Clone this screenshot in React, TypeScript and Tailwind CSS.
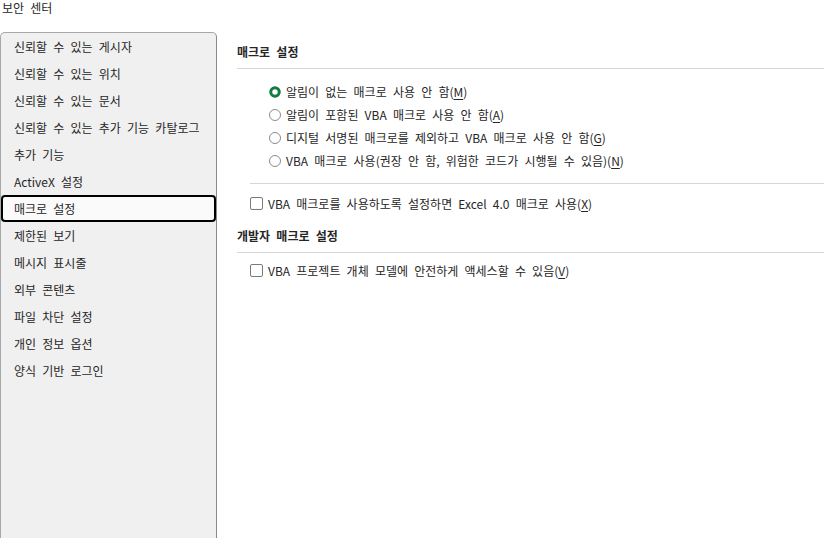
import React from "react";

const font = { fontFamily: '"Noto Sans CJK KR", "Noto Sans", sans-serif' };

const menu = [
  "신뢰할 수 있는 게시자",
  "신뢰할 수 있는 위치",
  "신뢰할 수 있는 문서",
  "신뢰할 수 있는 추가 기능 카탈로그",
  "추가 기능",
  "ActiveX 설정",
  "매크로 설정",
  "제한된 보기",
  "메시지 표시줄",
  "외부 콘텐츠",
  "파일 차단 설정",
  "개인 정보 옵션",
  "양식 기반 로그인",
];

function Radio({ checked }: { checked?: boolean }) {
  return (
    <svg width="12" height="12" viewBox="0 0 12 12" className="shrink-0">
      {checked ? (
        <circle cx="6" cy="6" r="4.25" fill="#ffffff" stroke="#107c41" strokeWidth="3" />
      ) : (
        <circle cx="6" cy="6" r="5.5" fill="#ffffff" stroke="#8a8a8a" strokeWidth="1" />
      )}
    </svg>
  );
}

function Check() {
  return <div className="w-[13px] h-[13px] shrink-0 rounded-[2px] border border-[#7a7a7a] bg-white" />;
}

function Acc({ k }: { k: string }) {
  return (
    <span>
      (<span className="underline underline-offset-2">{k}</span>)
    </span>
  );
}

export default function App() {
  return (
    <div
      className="w-[824px] h-[538px] bg-white text-[#262626] text-[12px] [word-spacing:3.5px] overflow-hidden flex flex-col"
      style={font}
    >
      <div className="h-[32px] pl-[2px] leading-[16px] text-[12px]">보안 센터</div>
      <div className="flex flex-1 min-h-0">
        <div className="w-[217px] shrink-0 bg-[#f0f0f0] border border-[#a8a8a8] border-r-[#8a8a8a] rounded-t-[5px] border-b-0 flex flex-col">
          {menu.map((m) =>
            m === "매크로 설정" ? (
              <div key={m} className="h-[27px] shrink-0 flex items-center pl-[11px] border-2 border-black rounded-[4px] bg-[#fafafa]">
                {m}
              </div>
            ) : (
              <div key={m} className="h-[27px] shrink-0 flex items-center pl-[13px]">
                {m}
              </div>
            )
          )}
        </div>
        <div className="flex-1 pl-[20px] flex flex-col">
          <div className="pt-[10px] pb-[6px] leading-[20px] font-bold border-b border-[#d6d6d6]">매크로 설정</div>
          <div className="mt-[11px] pl-[32px] flex flex-col">
            <div className="h-[23px] flex items-center gap-[5px]">
              <Radio checked />
              <span>
                알림이 없는 매크로 사용 안 함<Acc k="M" />
              </span>
            </div>
            <div className="h-[23px] flex items-center gap-[5px]">
              <Radio />
              <span>
                알림이 포함된 VBA 매크로 사용 안 함<Acc k="A" />
              </span>
            </div>
            <div className="h-[23px] flex items-center gap-[5px]">
              <Radio />
              <span>
                디지털 서명된 매크로를 제외하고 VBA 매크로 사용 안 함<Acc k="G" />
              </span>
            </div>
            <div className="h-[23px] flex items-center gap-[5px]">
              <Radio />
              <span>
                VBA 매크로 사용(권장 안 함, 위험한 코드가 시행될 수 있음)<Acc k="N" />
              </span>
            </div>
          </div>
          <div className="mt-[11px] ml-[13px] border-t border-[#d6d6d6]" />
          <div className="mt-[8px] ml-[13px] h-[23px] flex items-center gap-[5px]">
            <Check />
            <span>
              VBA 매크로를 사용하도록 설정하면 Excel 4.0 매크로 사용<Acc k="X" />
            </span>
          </div>
          <div className="mt-[11px] pb-[6px] leading-[20px] font-bold border-b border-[#d6d6d6]">개발자 매크로 설정</div>
          <div className="mt-[6px] ml-[13px] h-[23px] flex items-center gap-[5px]">
            <Check />
            <span>
              VBA 프로젝트 개체 모델에 안전하게 액세스할 수 있음<Acc k="V" />
            </span>
          </div>
        </div>
      </div>
    </div>
  );
}
